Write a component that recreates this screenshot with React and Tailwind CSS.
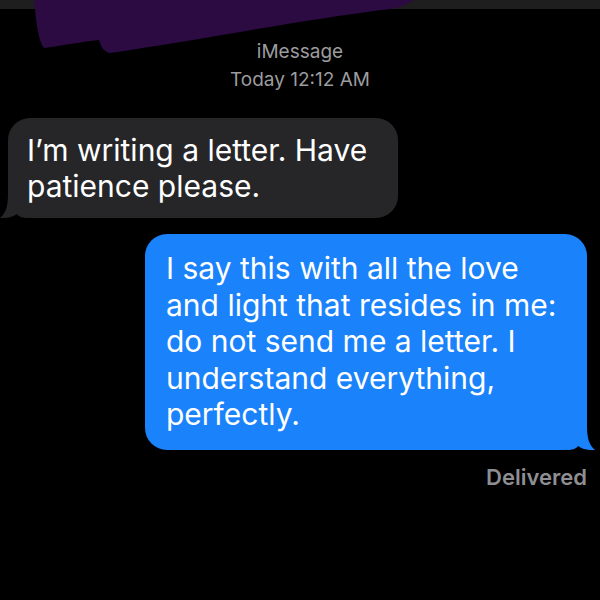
import React from "react";

const font = { fontFamily: "Inter, 'Liberation Sans', sans-serif" };

function Tail({ side, color }) {
  const flip = side === "left";
  return (
    <svg
      width="28"
      height="24"
      viewBox="0 0 28 24"
      className={`absolute bottom-0 ${flip ? "left-[-8px] -scale-x-100" : "right-[-8px]"}`}
    >
      <path d="M0 0 H20 C20 12 22 19 28 24 C21 24.5 15 23 11 20 C9 23 5 24 0 24 Z" fill={color} />
    </svg>
  );
}

export default function App() {
  return (
    <div className="relative w-[600px] h-[600px] bg-black overflow-hidden" style={font}>
      <div className="h-[9px] bg-[#1e1e1e]" />
      <svg width="600" height="60" className="absolute top-0 left-0">
        <path
          d="M34 0 H414 C408 4 400 8 390 9 C300 20 200 40 110 53 C104 52 101 47 99 40 C80 42 60 46 44 48 C38 40 36 20 34 0 Z"
          fill="#2c0b42"
        />
      </svg>

      <div className="flex flex-col items-center pt-[29px] text-[19px] leading-[28px] text-[#9c9c9f]">
        <div>iMessage</div>
        <div>Today 12:12 AM</div>
      </div>

      <div className="mt-[24px] ml-[8px] relative w-[390px] h-[100px] bg-[#262628] rounded-[22px] pl-[19px] pt-[14px] text-white text-[30px] leading-[36px]">
        <div>I’m writing a letter. Have</div>
        <div>patience please.</div>
        <Tail side="left" color="#262628" />
      </div>

      <div className="mt-[16px] ml-[145px] relative w-[442px] h-[216px] bg-[#1a82fb] rounded-[22px] pl-[21px] pt-[16px] text-white text-[30px] leading-[36.5px]">
        <div>I say this with all the love</div>
        <div>and light that resides in me:</div>
        <div>do not send me a letter. I</div>
        <div>understand everything,</div>
        <div>perfectly.</div>
        <Tail side="right" color="#1a82fb" />
      </div>

      <div className="mt-[11px] pr-[13px] text-right text-[22px] font-semibold text-[#8e8e93]">Delivered</div>
    </div>
  );
}
